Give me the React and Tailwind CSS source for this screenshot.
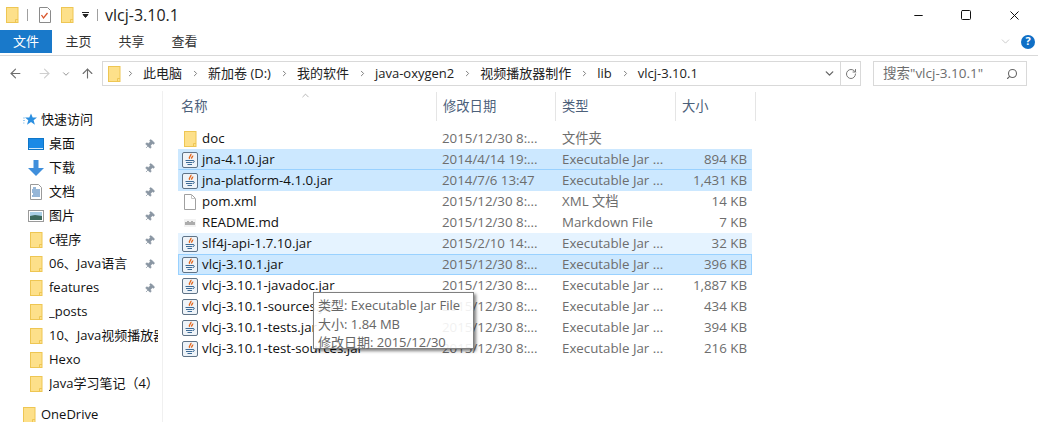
import React from 'react';
import { ArrowLeft, ArrowRight, ArrowUp, ChevronDown, ChevronRight, ChevronUp, RotateCw, Search, Minus, X, Square, Pin } from 'lucide-react';

const FONT = '"Open Sans", "Noto Sans CJK SC", sans-serif';

const NAV = [
    { label: '桌面', icon: 'desktop', pin: true },
    { label: '下载', icon: 'down', pin: true },
    { label: '文档', icon: 'doc', pin: true },
    { label: '图片', icon: 'pic', pin: true },
    { label: 'c程序', icon: 'folder', pin: true },
    { label: '06、Java语言', icon: 'folder', pin: true },
    { label: 'features', icon: 'folder', pin: true },
    { label: '_posts', icon: 'folder' },
    { label: '10、Java视频播放器', icon: 'folder' },
    { label: 'Hexo', icon: 'folder' },
    { label: 'Java学习笔记（4）', icon: 'folder' },
];

const FILES = [
    { name: 'doc', date: '2015/12/30 8:...', type: '文件夹', size: '', icon: 'folder' },
    { name: 'jna-4.1.0.jar', date: '2014/4/14 19:...', type: 'Executable Jar ...', size: '894 KB', icon: 'jar', state: 'sel' },
    { name: 'jna-platform-4.1.0.jar', date: '2014/7/6 13:47', type: 'Executable Jar ...', size: '1,431 KB', icon: 'jar', state: 'sel2' },
    { name: 'pom.xml', date: '2015/12/30 8:...', type: 'XML 文档', size: '14 KB', icon: 'blank' },
    { name: 'README.md', date: '2015/12/30 8:...', type: 'Markdown File', size: '7 KB', icon: 'md' },
    { name: 'slf4j-api-1.7.10.jar', date: '2015/2/10 14:...', type: 'Executable Jar ...', size: '32 KB', icon: 'jar', state: 'hover' },
    { name: 'vlcj-3.10.1.jar', date: '2015/12/30 8:...', type: 'Executable Jar ...', size: '396 KB', icon: 'jar', state: 'focus' },
    { name: 'vlcj-3.10.1-javadoc.jar', date: '2015/12/30 8:...', type: 'Executable Jar ...', size: '1,887 KB', icon: 'jar' },
    { name: 'vlcj-3.10.1-sources.jar', date: '2015/12/30 8:...', type: 'Executable Jar ...', size: '434 KB', icon: 'jar' },
    { name: 'vlcj-3.10.1-tests.jar', date: '2015/12/30 8:...', type: 'Executable Jar ...', size: '394 KB', icon: 'jar' },
    { name: 'vlcj-3.10.1-test-sources.jar', date: '2015/12/30 8:...', type: 'Executable Jar ...', size: '216 KB', icon: 'jar' },
];

const ROW_STYLES = {
    sel: 'bg-[#cce8ff] border-b border-b-[#99d1ff] border-x border-x-[#cce8ff] border-t border-t-[#cce8ff]',
    sel2: 'bg-[#cce8ff] border border-[#cce8ff]',
    hover: 'bg-[#e5f3ff] border border-[#e5f3ff]',
    focus: 'bg-[#cce8ff] border border-[#99d1ff]',
};

const FolderIcon = ({ className = 'w-4 h-4' }) => (
    <svg viewBox="0 0 16 16" className={className}>
        <rect x="2.5" y="0.5" width="11.5" height="15" fill="#fde08a" stroke="#eec653" />
        <path d="M11.5 15.5v-3h2.5" fill="none" stroke="#eec653" />
    </svg>
);

const JarIcon = () => (
    <svg viewBox="0 0 16 16" className="w-4 h-4">
        <rect x="0.5" y="0.5" width="15" height="15" rx="1.5" fill="#eef3f8" stroke="#5f7387" />
        <path d="M8.800 1.800c1.200 1.600-2.600 2.600-1.200 5M10.600 3.600c.6 1.200-1.600 1.600-.8 3" fill="none" stroke="#e2661c" strokeWidth="1.400" />
        <path d="M3.500 8.500h7.500M4 10.500h6.500M5.500 12.500h4.500" stroke="#3d6b96" strokeWidth="1" />
        <path d="M11 8.500c1.800 0 1.800 1.800 0 2" fill="none" stroke="#3d6b96" />
    </svg>
);

const BlankIcon = () => (
    <svg viewBox="0 0 16 16" className="w-4 h-4">
        <path d="M2.500.500h7l4 4v11h-11z" fill="#fff" stroke="#a0a0a0" />
        <path d="M9.500.500v4h4" fill="none" stroke="#c4c4c4" />
    </svg>
);

const MdIcon = () => (
    <svg viewBox="0 0 16 16" className="w-4 h-4">
        <rect x="2" y="4" width="12" height="8" fill="#f2f2f2" />
        <path d="M4 7v3M6 6v4M8 7v3M10 6v4M12 7v3" stroke="#666" strokeWidth="1" />
    </svg>
);

const NavIcon = ({ kind }) => {
    if (kind === 'desktop') return (
        <svg viewBox="0 0 16 16" className="w-4 h-4">
            <rect x="0.500" y="2.500" width="15" height="11" fill="#1a8ae6" stroke="#0f76c8" />
            <path d="M1 12.500h14" stroke="#cfe9fb" />
        </svg>
    );
    if (kind === 'down') return (
        <svg viewBox="0 0 16 16" className="w-4 h-4">
            <path d="M5.500 0h5v8H16l-8 8-8-8h5.500z" fill="#3f8fdc" />
        </svg>
    );
    if (kind === 'doc') return (
        <svg viewBox="0 0 16 16" className="w-4 h-4">
            <path d="M2.500.500h8l3 3v12h-11z" fill="#fff" stroke="#9a9a9a" />
            <path d="M5 4h3M4 6h8M4 8h8M5 10h7M4 12h8" stroke="#2f6fb0" />
        </svg>
    );
    if (kind === 'pic') return (
        <svg viewBox="0 0 16 16" className="w-4 h-4">
            <rect x="0.500" y="2.500" width="15" height="11" fill="#fff" stroke="#9a9a9a" />
            <rect x="2" y="4" width="12" height="4" fill="#a9cfe6" />
            <path d="M2 8l5-1 7 1v4H2z" fill="#3c6a5e" />
        </svg>
    );
    return <FolderIcon />;
};

const FileIcon = ({ kind }) => {
    if (kind === 'jar') return <JarIcon />;
    if (kind === 'blank') return <BlankIcon />;
    if (kind === 'md') return <MdIcon />;
    return <FolderIcon />;
};

const TitleBar = () => (
    <div className="flex items-center h-[30px] shrink-0">
        <div className="flex items-center pl-[4px]">
            <FolderIcon />
            <div className="w-px h-[12px] bg-[#a0a0a0] ml-[7px] mr-[9px]" />
            <svg viewBox="0 0 16 16" className="w-4 h-4">
                <path d="M2.500.500h8l3 3v12h-11z" fill="#fff" stroke="#8a8a8a" />
                <path d="M4.500 8l2 3 4-5" fill="none" stroke="#d9552b" strokeWidth="1.300" />
            </svg>
            <FolderIcon className="w-4 h-4 ml-[6px]" />
            <svg viewBox="0 0 8 8" className="w-2 h-2 ml-[7px]">
                <path d="M0 1.500h7M1 3.500h5l-2.500 3z" stroke="#222" fill="#222" strokeWidth="1" />
            </svg>
            <div className="w-px h-[12px] bg-[#a0a0a0] ml-[7px]" />
        </div>
        <span className="ml-[7px] text-[16px] text-[#222]">vlcj-3.10.1</span>
        <div className="ml-auto flex items-center text-[#111]">
            <div className="w-[48px] flex justify-center"><Minus size={13} strokeWidth={1} absoluteStrokeWidth /></div>
            <div className="w-[48px] flex justify-center"><Square size={12} strokeWidth={1} absoluteStrokeWidth /></div>
            <div className="w-[48px] flex justify-center"><X size={15} strokeWidth={1} absoluteStrokeWidth /></div>
        </div>
    </div>
);

const Ribbon = () => (
    <div className="flex items-center h-[26px] shrink-0 border-b border-[#d9d9d9] pb-[2px] text-[13px] text-[#333]">
        <div className="w-[52px] h-[23px] bg-[#1979ca] text-white flex items-center justify-center">文件</div>
        <div className="w-[53px] text-center">主页</div>
        <div className="w-[53px] text-center">共享</div>
        <div className="w-[53px] text-center">查看</div>
        <div className="ml-auto flex items-center pr-[3px]">
            <ChevronDown size={13} className="text-[#b0b0b0] mr-[9px]" strokeWidth={1.200} />
            <div className="w-[14px] h-[14px] rounded-full bg-[#0f6fc6] text-white text-[11px] font-bold flex items-center justify-center">?</div>
        </div>
    </div>
);

const NavBar = () => (
    <div className="flex items-center h-[35px] shrink-0 text-[13px] text-[#222]">
        <div className="flex items-center w-[102px] pl-[8px]">
            <ArrowLeft size={15} className="text-[#6d6d6d]" strokeWidth={1.800} />
            <ArrowRight size={15} className="text-[#cfcfcf] ml-[14px]" strokeWidth={1.800} />
            <ChevronDown size={10} className="text-[#8a8a8a] ml-[9px]" strokeWidth={2.200} />
            <ArrowUp size={15} className="text-[#6d6d6d] ml-[9px]" strokeWidth={1.800} />
        </div>
        <div className="flex items-center w-[759px] h-[25px] border border-[#d9d9d9]">
            <FolderIcon className="w-4 h-4 ml-[3px] mr-[4px]" />
            {['此电脑', '新加卷 (D:)', '我的软件', 'java-oxygen2', '视频播放器制作', 'lib', 'vlcj-3.10.1'].map((c) => (
                <span key={c} className="flex items-center whitespace-nowrap">
                    <ChevronRight size={9} className="text-[#777] mr-[8px]" strokeWidth={2.500} />
                    <span className="mr-[9px]">{c}</span>
                </span>
            ))}
            <div className="ml-auto flex items-center h-full">
                <ChevronDown size={13} className="text-[#666] mr-[4px]" strokeWidth={2.500} />
                <div className="w-[20px] h-full border-l border-[#d9d9d9] flex items-center justify-center">
                    <RotateCw size={12} className="text-[#777]" strokeWidth={2} />
                </div>
            </div>
        </div>
        <div className="flex items-center w-[154px] h-[25px] ml-[12px] border border-[#d9d9d9] pl-[9px] pr-[8px] text-[13.5px] text-[#6d6d6d]">
            <span className="whitespace-nowrap">搜索"vlcj-3.10.1"</span>
            <Search size={12} className="ml-auto text-[#666] -scale-x-100" strokeWidth={2.200} />
        </div>
    </div>
);

const Sidebar = () => (
    <div className="w-[163px] shrink-0 border-r border-[#f0f0f0] text-[13px] text-[#111] pt-[17px]">
        <div className="flex items-center h-[24px] pl-[23px]">
            <svg viewBox="0 0 14 14" className="w-[14px] h-[14px]">
                <path d="M8 .500l1.700 4H14l-3.400 2.700 1.300 4.500L8 9l-4 2.700 1.300-4.500L2 4.500h4.300z" fill="#2b8fe0" />
                <path d="M0 5h2M0 7.500h2M0 10h1.500" stroke="#9ccbef" />
            </svg>
            <span className="ml-[4px]">快速访问</span>
        </div>
        {NAV.map((n) => (
            <div key={n.label} className="flex items-center h-[24px] pl-[28px] pr-[4px]">
                <NavIcon kind={n.icon} />
                <span className="ml-[5px] whitespace-nowrap overflow-hidden flex-1">{n.label}</span>
                {n.pin && <Pin size={11} className="text-[#8a96a3] rotate-45 ml-[4px] mr-[3px] fill-[#8a96a3]" strokeWidth={1.500} />}
            </div>
        ))}
        <div className="flex items-center h-[24px] pl-[21px] mt-[7px]">
            <FolderIcon />
            <span className="ml-[4px]">OneDrive</span>
        </div>
    </div>
);

const HeaderCell = ({ width, children }) => (
    <div className={`${width} h-[29px] border-r border-[#e5e5e5] pl-[6px] flex items-center text-[#4c607a]`}>{children}</div>
);

const FileList = () => (
    <div className="relative flex-1 text-[13.3px] pl-[15px] pt-[1px] overflow-hidden">
        <div className="flex">
            <div className="relative w-[259px] h-[29px] border-r border-[#e5e5e5] pl-[3px] flex items-center text-[#4c607a]">
                名称
                <ChevronUp size={11} className="absolute left-[122px] -top-[2px] text-[#888]" strokeWidth={1.300} />
            </div>
            <HeaderCell width="w-[119px]">修改日期</HeaderCell>
            <HeaderCell width="w-[120px]">类型</HeaderCell>
            <HeaderCell width="w-[80px]">大小</HeaderCell>
        </div>
        <div className="mt-[7px] w-[574px]">
            {FILES.map((f) => (
                <div key={f.name} className={`flex items-center h-[21px] ${ROW_STYLES[f.state] || 'border border-transparent'}`}>
                    <div className="w-[258px] flex items-center pl-[3px] text-[#111] whitespace-nowrap">
                        <FileIcon kind={f.icon} />
                        <span className="ml-[4px]">{f.name}</span>
                    </div>
                    <div className="w-[120px] pl-[5px] text-[#6d6d6d] whitespace-nowrap">{f.date}</div>
                    <div className="w-[119px] pl-[5px] text-[#6d6d6d] whitespace-nowrap">{f.type}</div>
                    <div className="flex-1 text-right pr-[4px] text-[#6d6d6d] whitespace-nowrap">{f.size}</div>
                </div>
            ))}
        </div>
        {/* Tooltip */}
        <div className="absolute left-[150px] top-[201px] w-[161px] h-[57px] bg-white/90 border border-[#808080] shadow-[2px_2px_3px_rgba(0,0,0,0.5)] pl-[4px] pt-[3px] text-[13px] text-[#666] leading-[18.5px] whitespace-nowrap">
            <div>类型: Executable Jar File</div>
            <div>大小: 1.84 MB</div>
            <div>修改日期: 2015/12/30</div>
        </div>
    </div>
);

export default function App() {
    return (
        <div className="w-[1038px] h-[422px] bg-white flex flex-col overflow-hidden" style={{ fontFamily: FONT }}>
            <TitleBar />
            <Ribbon />
            <NavBar />
            <div className="flex flex-1 min-h-0">
                <Sidebar />
                <FileList />
            </div>
        </div>
    );
}
